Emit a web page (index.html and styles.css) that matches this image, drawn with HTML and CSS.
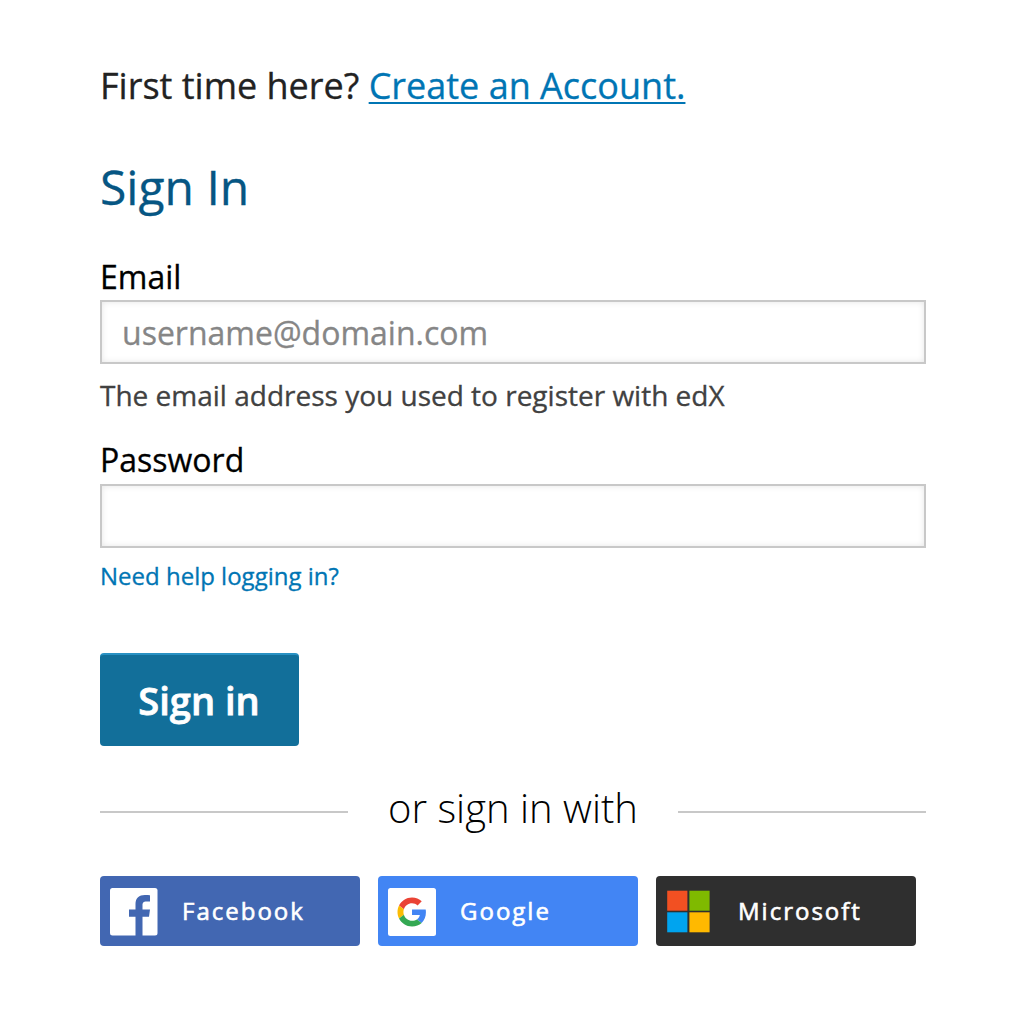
FILE: index.html
```html
<!DOCTYPE html>
<html lang="en">
<head>
    <meta charset="UTF-8">
    <meta name="viewport" content="width=device-width, initial-scale=1.0">
    <title>Sign In</title>
    <link rel="stylesheet" href="styles.css">
</head>
<body>
    <main class="login">
        <p class="first-time">First time here? <a href="#" class="create-account">Create an Account.</a></p>
        <h1 class="title">Sign In</h1>
        <form class="login-form">
            <label for="email">Email</label>
            <input type="email" id="email" placeholder="username@domain.com">
            <p class="tip">The email address you used to register with edX</p>
            <label for="password" class="password-label">Password</label>
            <input type="password" id="password">
            <a href="#" class="help">Need help logging in?</a>
            <button type="button" class="submit">Sign in</button>
        </form>
        <div class="divider"><h2><span>or sign in with</span></h2></div>
        <div class="providers">
            <button type="button" class="provider facebook">
                <svg class="icon" viewBox="0 0 48 48">
                    <rect width="47.500" height="47.500" rx="2.500" fill="#fff"/>
                    <path fill="#4267b2" d="M25.500 48V28.700H19V21.500H25.500V16C25.500 10 29.200 7 34.800 7C37.400 7 39.300 7.200 40 7.300V13.600H36.500C33.300 13.600 32.500 15.200 32.500 17.200V21.500H40L39 28.700H32.500V48Z"/>
                </svg>
                <span>Facebook</span>
            </button>
            <button type="button" class="provider google">
                <svg class="icon" viewBox="0 0 48 48">
                    <rect width="48" height="48" rx="2.500" fill="#fff"/>
                    <g transform="translate(9.500 9.500) scale(.605)">
                        <path fill="#ea4335" d="M24 9.500c3.540 0 6.710 1.220 9.210 3.600l6.850-6.850C35.900 2.380 30.470 0 24 0 14.620 0 6.510 5.380 2.560 13.220l7.980 6.190C12.430 13.720 17.740 9.500 24 9.500z"/>
                        <path fill="#4285f4" d="M46.980 24.550c0-1.570-.15-3.090-.38-4.550H24v9.020h12.940c-.58 2.960-2.260 5.480-4.780 7.180l7.730 6c4.510-4.180 7.090-10.360 7.090-17.650z"/>
                        <path fill="#fbbc05" d="M10.530 28.590c-.48-1.450-.76-2.990-.76-4.590s.27-3.140.76-4.590l-7.980-6.190C.92 16.460 0 20.120 0 24c0 3.880.92 7.540 2.560 10.780l7.970-6.190z"/>
                        <path fill="#34a853" d="M24 48c6.480 0 11.930-2.130 15.890-5.810l-7.730-6c-2.150 1.450-4.920 2.300-8.160 2.300-6.260 0-11.570-4.220-13.470-9.910l-7.980 6.190C6.510 42.620 14.620 48 24 48z"/>
                    </g>
                </svg>
                <span>Google</span>
            </button>
            <button type="button" class="provider microsoft">
                <svg class="icon" viewBox="0 0 48 48">
                    <path fill="#f25022" d="M1.200 2.700h20.200v20H1.200z"/>
                    <path fill="#7fba00" d="M23.400 2.700h20.200v20H23.400z"/>
                    <path fill="#00a4ef" d="M1.200 24.300h20.200v20H1.200z"/>
                    <path fill="#ffb900" d="M23.400 24.300h20.200v20H23.400z"/>
                </svg>
                <span>Microsoft</span>
            </button>
        </div>
    </main>
</body>
</html>
```
FILE: styles.css
```css
* {
    box-sizing: border-box;
}
body {
    margin: 0;
    background: #fff;
    color: #222;
    font-family: "Open Sans", sans-serif;
}
.login {
    width: 826px;
    margin-left: 100px;
    padding-top: 60px;
}
.first-time {
    margin: 0;
    font-size: 36px;
    line-height: 52px;
    -webkit-text-stroke: 0.3px;
}
.create-account {
    color: #0075b4;
    text-decoration: underline;
    text-decoration-thickness: 2px;
    text-underline-offset: 3px;
}
.title {
    margin: 43px 0 0;
    color: #065683;
    font-size: 48px;
    font-weight: 400;
    line-height: 64px;
    -webkit-text-stroke: 0.3px;
}
.login-form {
    display: flex;
    flex-direction: column;
    align-items: flex-start;
    padding-top: 37px;
    -webkit-text-stroke: 0.3px;
}
.login-form label {
    padding-bottom: 2px;
    color: #000;
    font-size: 32px;
    line-height: 42px;
}
.login-form .password-label {
    padding-bottom: 3px;
}
.login-form input {
    width: 100%;
    height: 64px;
    padding: 0 20px;
    border: 2px solid #c8c8c8;
    border-radius: 0;
    box-shadow: inset 0 0 6px rgba(0, 0, 0, 0.1);
    background: #fff;
    font: 32px "Open Sans", sans-serif;
}
.login-form input::placeholder {
    color: #868686;
}
.tip {
    margin: 11px 0 24px;
    color: #414141;
    font-size: 28px;
    line-height: 40px;
}
.help {
    margin-top: 10px;
    color: #0075b4;
    font-size: 24px;
    line-height: 36px;
    text-decoration: none;
}
.submit {
    width: 199px;
    height: 93px;
    margin-top: 59px;
    padding: 0 1px 2px 0;
    border: 0;
    border-top: 2px solid #2991c3;
    border-radius: 4px;
    background: #126f9a;
    color: #fff;
    font: 600 38px "Open Sans", sans-serif;
    -webkit-text-stroke: 0.8px;
}
.divider h2 {
    display: flex;
    align-items: center;
    gap: 40px;
    margin: 30px 0 0;
    color: #000;
    font-size: 40px;
    font-weight: 300;
    line-height: 64px;
}
.divider h2 span {
    padding-bottom: 8px;
}
.divider h2::before,
.divider h2::after {
    content: "";
    flex: 1;
    height: 2px;
    background: #c8c8c8;
}
.providers {
    display: flex;
    gap: 18px;
    margin-top: 28px;
}
.provider {
    display: flex;
    align-items: center;
    width: 260px;
    height: 70px;
    padding: 0 10px;
    border: 0;
    border-radius: 4px;
    color: #fff;
    font: 24px "Open Sans", sans-serif;
    letter-spacing: 2px;
    -webkit-text-stroke: 0.6px;
}
.provider span {
    padding-bottom: 2px;
}
.icon {
    flex: none;
    width: 48px;
    height: 48px;
    margin: 2px 24px 0 0;
}
.facebook {
    background: #4267b2;
}
.google {
    background: #4285f4;
}
.microsoft {
    background: #2f2f2f;
}
```
